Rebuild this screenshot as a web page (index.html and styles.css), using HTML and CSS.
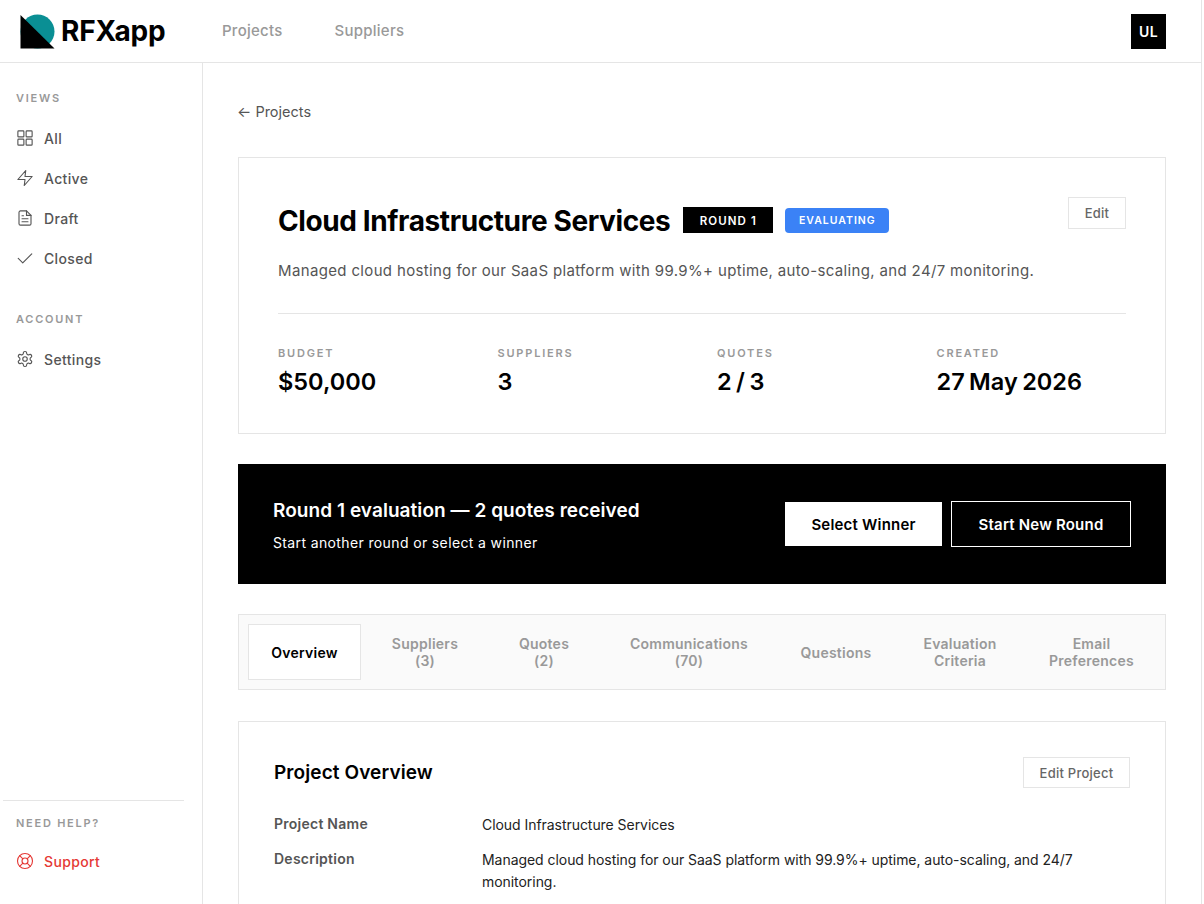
FILE: index.html
```html
<!DOCTYPE html>
<html lang="en">
<head>
<meta charset="utf-8">
<title>RFXapp</title>
<link rel="stylesheet" href="styles.css">
</head>
<body>
<div class="app">
  <header class="topbar">
    <div class="brand">
      <svg class="logo" width="35" height="35" viewBox="0 0 35 35"><circle cx="17.5" cy="17.5" r="17" fill="#0a8f94"/><path d="M0.5 1 L34.5 34.5 L0.5 34.5 Z" fill="#000"/></svg>
      <span class="brand-name">RFXapp</span>
    </div>
    <nav class="topnav"><a>Projects</a><a>Suppliers</a></nav>
    <div class="avatar">UL</div>
  </header>
  <div class="body-row">
    <aside class="sidebar">
      <div class="side-top">
        <div class="side-label">VIEWS</div>
        <a class="side-item"><svg class="ico" viewBox="0 0 24 24"><rect x="2.5" y="2.5" width="8" height="8" rx="1"/><rect x="13.5" y="2.5" width="8" height="8" rx="1"/><rect x="2.5" y="13.5" width="8" height="8" rx="1"/><rect x="13.5" y="13.5" width="8" height="8" rx="1"/></svg>All</a>
        <a class="side-item"><svg class="ico" viewBox="0 0 24 24"><path d="M13 2 2.5 14h9.5l-1 8 10.5-12H12l1-8Z"/></svg>Active</a>
        <a class="side-item"><svg class="ico" viewBox="0 0 24 24"><path d="M14 2.5H6a2 2 0 0 0-2 2v15a2 2 0 0 0 2 2h12a2 2 0 0 0 2-2V8.5l-6-6Z"/><path d="M14 2.5v6h6M8 13h8M8 17h8M8 9h2"/></svg>Draft</a>
        <a class="side-item"><svg class="ico" viewBox="0 0 24 24"><path d="M3 12.5 9 18.5 21 6.5"/></svg>Closed</a>
        <div class="side-label side-label-gap">ACCOUNT</div>
        <a class="side-item"><svg class="ico" viewBox="0 0 24 24"><path d="M12.2 2h-.4a2 2 0 0 0-2 2v.2a2 2 0 0 1-1 1.7l-.4.3a2 2 0 0 1-2 0l-.2-.1a2 2 0 0 0-2.7.7l-.2.4a2 2 0 0 0 .7 2.7l.2.1a2 2 0 0 1 1 1.7v.5a2 2 0 0 1-1 1.8l-.2.1a2 2 0 0 0-.7 2.7l.2.4a2 2 0 0 0 2.7.7l.2-.1a2 2 0 0 1 2 0l.4.3a2 2 0 0 1 1 1.7v.2a2 2 0 0 0 2 2h.4a2 2 0 0 0 2-2v-.2a2 2 0 0 1 1-1.7l.4-.3a2 2 0 0 1 2 0l.2.1a2 2 0 0 0 2.7-.7l.2-.4a2 2 0 0 0-.7-2.7l-.2-.1a2 2 0 0 1-1-1.8v-.5a2 2 0 0 1 1-1.7l.2-.1a2 2 0 0 0 .7-2.7l-.2-.4a2 2 0 0 0-2.7-.7l-.2.1a2 2 0 0 1-2 0l-.4-.3a2 2 0 0 1-1-1.7V4a2 2 0 0 0-2-2Z"/><circle cx="12" cy="12" r="3"/></svg>Settings</a>
      </div>
      <div class="side-bottom">
        <div class="side-label">NEED HELP?</div>
        <a class="side-item support"><svg class="ico" viewBox="0 0 24 24"><circle cx="12" cy="12" r="10"/><circle cx="12" cy="12" r="4"/><path d="m4.9 4.9 4.3 4.3M14.8 14.8l4.3 4.3M14.8 9.2l4.3-4.3M4.9 19.1l4.3-4.3"/></svg>Support</a>
      </div>
    </aside>
    <main class="main">
      <a class="back"><span class="arrow">←</span> Projects</a>
      <section class="card head-card">
        <div class="title-row">
          <div class="title-left">
            <h1>Cloud Infrastructure Services</h1>
            <span class="badge-round">ROUND 1</span>
            <span class="badge-eval">EVALUATING</span>
          </div>
          <button class="btn-outline btn-edit">Edit</button>
        </div>
        <p class="desc">Managed cloud hosting for our SaaS platform with 99.9%+ uptime, auto-scaling, and 24/7 monitoring.</p>
        <div class="stats">
          <div><div class="stat-label">BUDGET</div><div class="stat-value">$50,000</div></div>
          <div><div class="stat-label">SUPPLIERS</div><div class="stat-value">3</div></div>
          <div><div class="stat-label">QUOTES</div><div class="stat-value">2 / 3</div></div>
          <div><div class="stat-label">CREATED</div><div class="stat-value">27 May 2026</div></div>
        </div>
      </section>
      <section class="banner">
        <div>
          <div class="banner-title">Round 1 evaluation — 2 quotes received</div>
          <div class="banner-sub">Start another round or select a winner</div>
        </div>
        <div class="banner-actions">
          <button class="btn-white">Select Winner</button>
          <button class="btn-dark">Start New Round</button>
        </div>
      </section>
      <nav class="tabs">
        <a class="tab active">Overview</a>
        <a class="tab t-sup">Suppliers (3)</a>
        <a class="tab t-quo">Quotes (2)</a>
        <a class="tab t-com">Communications (70)</a>
        <a class="tab t-que">Questions</a>
        <a class="tab t-eva">Evaluation Criteria</a>
        <a class="tab t-ema">Email Preferences</a>
      </nav>
      <section class="card overview">
        <div class="ov-head">
          <h2>Project Overview</h2>
          <button class="btn-outline btn-edit-project">Edit Project</button>
        </div>
        <div class="ov-rows">
          <div class="ov-row"><div class="ov-key">Project Name</div><div class="ov-val">Cloud Infrastructure Services</div></div>
          <div class="ov-row"><div class="ov-key">Description</div><div class="ov-val">Managed cloud hosting for our SaaS platform with 99.9%+ uptime, auto-scaling, and 24/7 monitoring.</div></div>
        </div>
      </section>
    </main>
  </div>
</div>
</body>
</html>
```
FILE: styles.css
```css
* { box-sizing: border-box; }
html, body { margin: 0; height: 100%; overflow: hidden; background: #fff; }
body { font-family: Inter, "Liberation Sans", sans-serif; color: #000; }
a { text-decoration: none; color: inherit; }
button { font-family: inherit; cursor: pointer; }
.app { width: 1202px; height: 904px; border-right: 1px solid #e5e5e5; display: flex; flex-direction: column; }
.topbar { height: 63px; flex: none; border-bottom: 1px solid #e5e5e5; display: flex; align-items: center; padding: 0 35px 0 20px; }
.brand { display: flex; align-items: center; gap: 6px; width: 202px; }
.logo { display: block; }
.brand-name { font-size: 28px; font-weight: 700; letter-spacing: -0.15px; line-height: 36px; }
.topnav { display: flex; gap: 52px; font-size: 15px; font-weight: 500; letter-spacing: 0.25px; color: #999; line-height: 20px; }
.avatar { margin-left: auto; width: 35px; height: 35px; background: #000; color: #fff; font-size: 14px; font-weight: 600; display: flex; align-items: center; justify-content: center; letter-spacing: 0.3px; }
.body-row { flex: 1; display: flex; min-height: 0; }
.sidebar { width: 203px; flex: none; border-right: 1px solid #e5e5e5; display: flex; flex-direction: column; justify-content: space-between; padding: 0 18px 0 3px; }
.side-top { padding-top: 29px; }
.side-label { font-size: 11px; font-weight: 600; letter-spacing: 1.75px; color: #999; line-height: 13px; padding-left: 13px; }
.side-label-gap { margin-top: 35px; }
.side-item { display: flex; align-items: center; gap: 10px; height: 40px; font-size: 14px; font-weight: 500; letter-spacing: 0.35px; color: #555; padding-left: 13px; }
.side-label + .side-item { margin-top: 13px; }
.ico { width: 18px; height: 18px; fill: none; stroke: currentColor; stroke-width: 1.5; stroke-linecap: round; stroke-linejoin: round; flex: none; }
.side-bottom { border-top: 1px solid #e5e5e5; padding-top: 16px; height: 104px; }
.side-bottom .side-item { margin-top: 11px; }
.support { color: #e53935; }
.main { flex: 1; padding: 38px 35px 0; min-width: 0; overflow: hidden; }
.back { display: block; font-size: 14.5px; color: #555; line-height: 22px; margin-left: -1px; }
.arrow { font-size: 15px; }
.card { border: 1px solid #e5e5e5; background: #fff; }
.head-card { margin-top: 34px; height: 277px; padding: 39px 39px 0; }
.title-row { display: flex; justify-content: space-between; align-items: flex-start; }
.title-left { display: flex; align-items: center; gap: 12px; margin-top: 8px; }
h1 { margin: 0 1px 0 0; font-size: 28px; font-weight: 700; letter-spacing: -0.4px; line-height: 28px; padding-top: 2px; }
.badge-round { background: #000; color: #fff; font-size: 11.5px; font-weight: 600; letter-spacing: 1.1px; height: 26px; width: 90px; padding-top: 1px; display: flex; align-items: center; justify-content: center; }
.badge-eval { background: #3b82f6; color: #fff; font-size: 10.5px; font-weight: 600; letter-spacing: 1px; height: 25px; width: 104px; border-radius: 4px; display: flex; align-items: center; justify-content: center; }
.btn-outline { background: #fff; border: 1px solid #e5e5e5; color: #666; font-size: 13px; font-weight: 500; letter-spacing: 0.25px; }
.btn-edit { width: 58px; height: 32px; }
.desc { margin: 24px 0 0; font-size: 15px; letter-spacing: 0.35px; color: #555; line-height: 24px; padding-bottom: 30px; border-bottom: 1px solid #e5e5e5; }
.stats { display: grid; grid-template-columns: 219.5px 219.5px 219.5px auto; margin-top: 32px; }
.stat-label { font-size: 11px; letter-spacing: 1.8px; color: #999; font-weight: 600; line-height: 14px; }
.stat-value { margin-top: 7px; font-size: 23.5px; word-spacing: -1.5px; font-weight: 600; line-height: 30px; }
.banner { margin-top: 30px; height: 120px; background: #000; color: #fff; display: flex; align-items: center; justify-content: space-between; padding: 0 35px; }
.banner-title { font-size: 19px; font-weight: 600; letter-spacing: 0.06px; line-height: 26px; margin-top: 2px; }
.banner-sub { font-size: 14px; letter-spacing: 0.37px; margin-top: 9px; line-height: 20px; }
.banner-actions { display: flex; gap: 9px; align-items: center; }
.btn-white { width: 157px; height: 44px; background: #fff; color: #000; border: 0; font-size: 15px; font-weight: 600; letter-spacing: 0.2px; }
.btn-dark { width: 180px; height: 46px; background: #000; color: #fff; border: 1px solid #fff; font-size: 15px; font-weight: 600; letter-spacing: 0.2px; }
.tabs { margin-top: 30px; height: 76px; border: 1px solid #e5e5e5; background: #fafafa; padding: 9px; display: flex; align-items: stretch; }
.tab { display: flex; align-items: center; justify-content: center; text-align: center; font-size: 14px; font-weight: 600; letter-spacing: 0.25px; color: #999; line-height: 17px; }
.tab.active { width: 113px; background: #fff; border: 1px solid #e5e5e5; color: #000; }
.t-sup { width: 128px; padding: 0 28px; }
.t-quo { width: 110px; padding: 0 28px; }
.t-com { width: 180px; padding: 0 24px; }
.t-que { width: 114px; }
.t-eva { width: 134px; padding: 0 28px; }
.t-ema { width: 129px; padding: 0 28px; }
.overview { margin-top: 31px; height: 300px; padding: 34px 35px 0; }
.ov-head { display: flex; justify-content: space-between; align-items: center; }
h2 { margin: 0; font-size: 19px; font-weight: 600; letter-spacing: 0.1px; }
.btn-edit-project { width: 107px; height: 31px; margin-top: 1px; }
.ov-rows { display: flex; flex-direction: column; gap: 12px; margin-top: 25px; }
.ov-row { display: flex; font-size: 14px; line-height: 22px; }
.ov-key { width: 208px; flex: none; font-weight: 600; letter-spacing: 0.25px; color: #555; }
.ov-val { color: #222; width: 620px; letter-spacing: -0.05px; padding-top: 1px; }
```
